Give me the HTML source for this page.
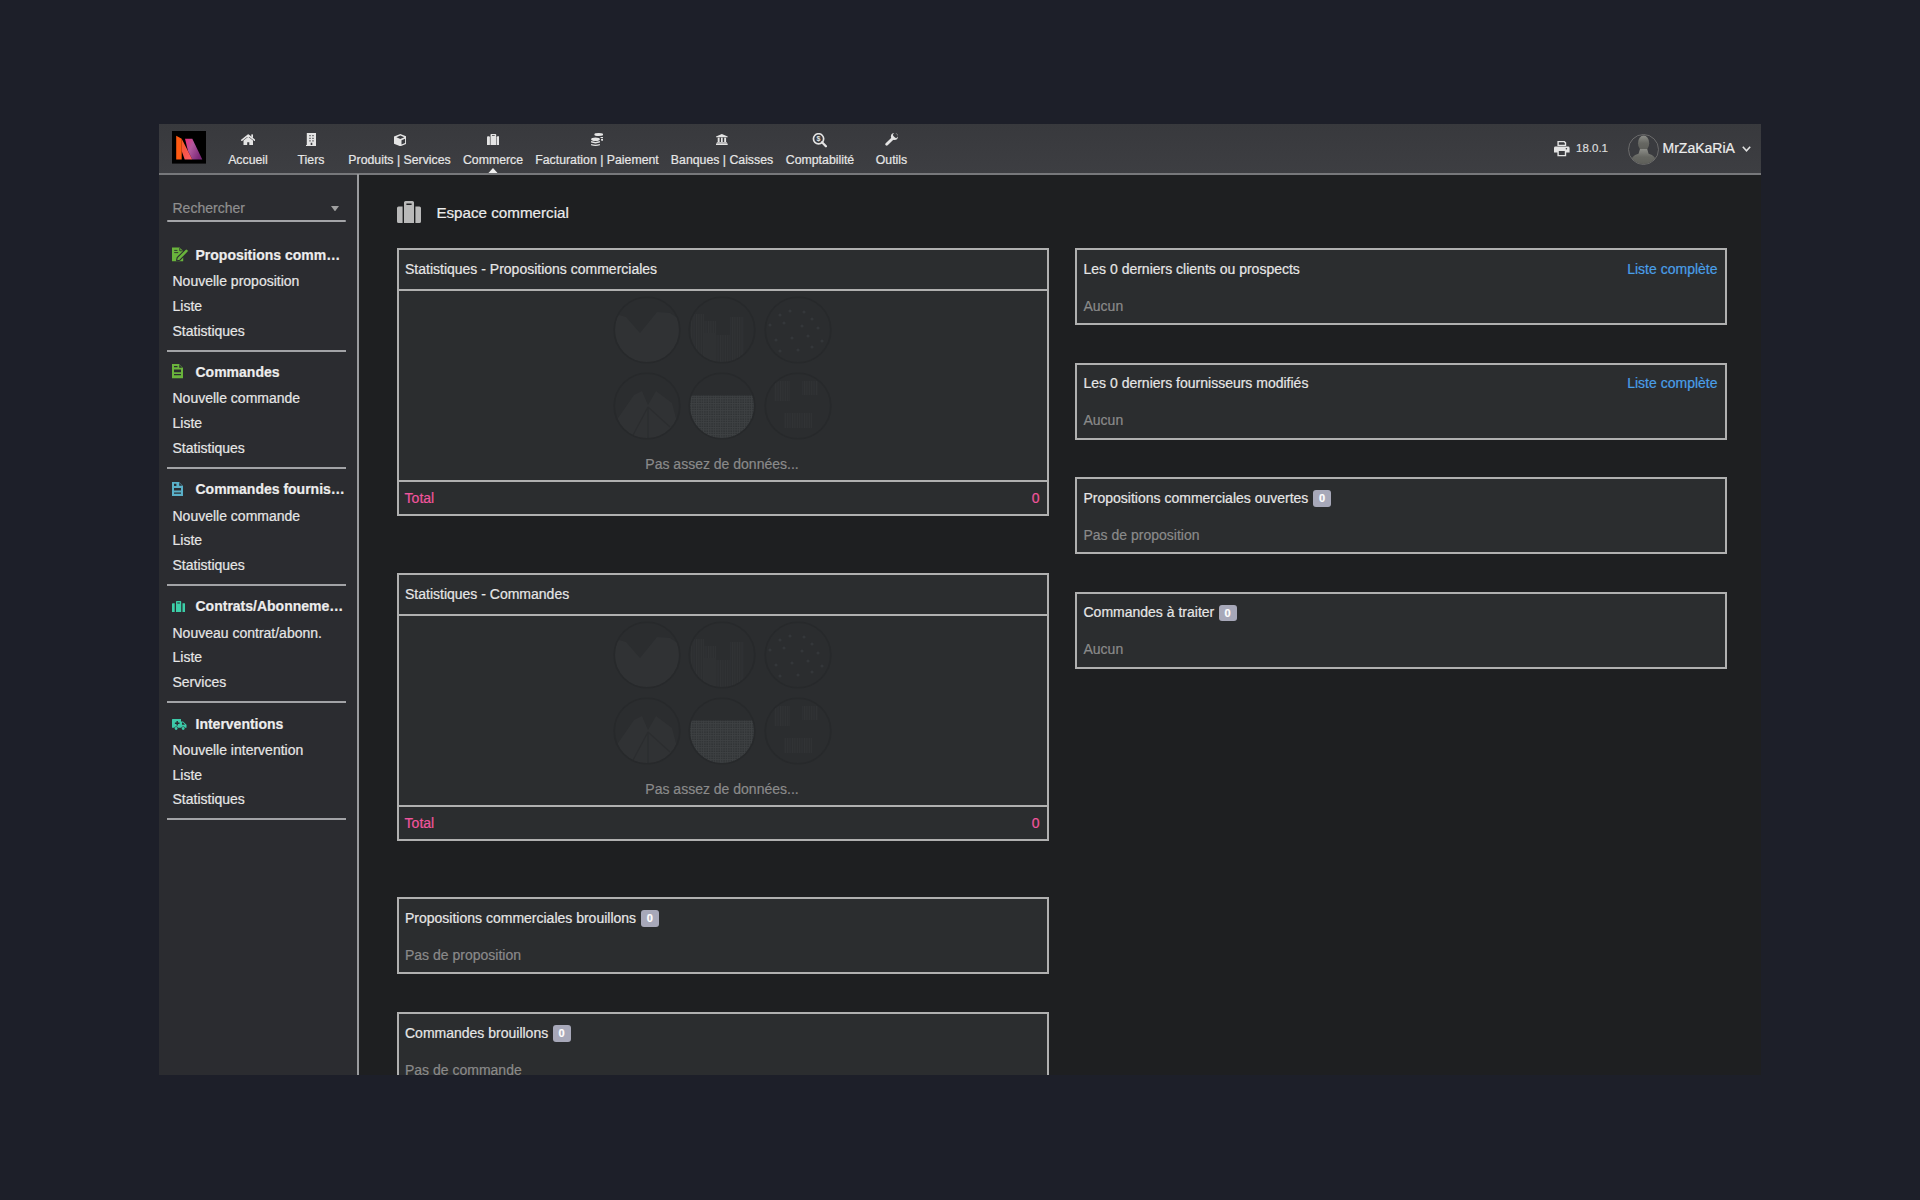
<!DOCTYPE html>
<html><head><meta charset="utf-8">
<style>
*{margin:0;padding:0;box-sizing:border-box}
html,body{width:1920px;height:1200px;overflow:hidden;background:#1d1f29;font-family:"Liberation Sans",sans-serif}
.a{position:absolute}
.t{position:absolute;white-space:nowrap;line-height:1;font-size:14px;color:#e6e6e6;-webkit-text-stroke:0.2px currentColor}
#frame{position:absolute;left:159px;top:124px;width:1602px;height:951px;background:#1e1f21;overflow:hidden}
#hdr{position:absolute;left:0;top:0;width:1602px;height:51px;background:linear-gradient(#38393d,#3d3e42);border-bottom:2px solid #77787b}
#side{position:absolute;left:0;top:51px;width:200px;height:900px;background:#2a2b2f;border-right:2px solid #9a9b9e}
.nav{position:absolute;top:29.7px;font-size:12.3px;line-height:1;color:#e6e6e6;-webkit-text-stroke:0.2px currentColor;white-space:nowrap;transform:translateX(-50%)}
.ico{position:absolute;fill:#e4e4e4}
.box{position:absolute;background:#2b2d2f;border:2px solid #b0b0b0}
.sep{position:absolute;height:2px;background:#b0b0b0}
.gray{color:#8a8a8a}
.pink{color:#f0559d}
.link{color:#4a9fe8}
.badge{position:absolute;width:18px;height:16px;border-radius:3px;background:#a7a8b9;color:#fff;font-size:11px;font-weight:bold;line-height:16.5px;text-align:center;-webkit-text-stroke:0.2px #fff}
.ssep{position:absolute;left:8px;width:179px;height:2px;background:#a9aaad}
.sh{font-weight:bold}
</style></head><body>
<div id="frame">
  <div id="hdr">
    <!-- logo -->
    <svg class="a" style="left:12.7px;top:7.2px" width="34.3" height="32.6" viewBox="0 0 34.3 32.6">
      <rect width="34.3" height="32.6" fill="#000"/>
      <defs>
        <linearGradient id="g1" x1="0" y1="0" x2="1" y2="1"><stop offset="0" stop-color="#ff5a1a"/><stop offset="0.5" stop-color="#f8554a"/><stop offset="1" stop-color="#ff5c6e"/></linearGradient>
        <linearGradient id="g2" x1="0" y1="0" x2="1" y2="0.6"><stop offset="0" stop-color="#f02c7c"/><stop offset="0.45" stop-color="#b0589e"/><stop offset="1" stop-color="#7c2878"/></linearGradient>
      </defs>
      <polygon points="13,7.8 20.3,7.8 30.3,28.5 20.3,28.5 16,20" fill="url(#g2)"/>
      <polygon points="4.2,4.7 9.7,7.8 9.7,28.5 4.2,28.5" fill="#ff5a12"/><polygon points="9.7,7.8 20.3,28.5 12.7,28.5 9.7,20" fill="url(#g1)"/>
    </svg>
    <!-- nav icons -->
    <svg class="ico" style="left:81.8px;top:9.7px" width="14.5" height="11.4" viewBox="0 0 14.5 11.4"><path d="M0.9 6.2 L7.25 1.1 L13.6 6.2" fill="none" stroke="#e4e4e4" stroke-width="1.7" stroke-linecap="round" stroke-linejoin="round"/><rect x="10.3" y="0.4" width="1.7" height="3.4"/><path d="M2.5 6.6 L7.25 2.8 L12 6.6 V11.4 H8.3 V8.2 H6.2 V11.4 H2.5 Z"/></svg>
    <svg class="ico" style="left:146.6px;top:8.8px" width="10.9" height="13.2" viewBox="0 0 10.9 13.2"><path d="M0.8 0 H10.1 V12.1 H10.9 V13.2 H0 V12.1 H0.8 Z M3.4 2.1 V3.3 H4.6 V2.1 Z M6.4 2.1 V3.3 H7.6 V2.1 Z M3.4 4.7 V5.9 H4.6 V4.7 Z M6.4 4.7 V5.9 H7.6 V4.7 Z M3.4 7.3 V8.5 H4.6 V7.3 Z M6.4 7.3 V8.5 H7.6 V7.3 Z M4.7 9.8 V12.1 H6.3 V9.8 Z" fill-rule="evenodd"/></svg>
    <svg class="ico" style="left:234.5px;top:9.5px" width="12.7" height="12.3" viewBox="0 0 12.7 12.3"><path d="M6.35 0 L12.7 2.6 V9.7 L6.35 12.3 L0 9.7 V2.6 Z M6.35 1.5 L2.4 3.2 L6.35 4.9 L10.3 3.2 Z M7.5 6.2 V10.4 L11.1 8.9 V4.7 Z" fill-rule="evenodd"/></svg>
    <svg class="ico" style="left:327.6px;top:9.8px" width="12.5" height="11.5" viewBox="0 0 12.5 11.5"><path d="M3.5 0.8 Q3.5 0 4.3 0 H8.4 Q9.2 0 9.2 0.8 V11.5 H3.5 Z M5 0.9 V1.7 H7.7 V0.9 Z" fill-rule="evenodd"/><rect x="0" y="2.2" width="2.9" height="9.3" rx="1"/><rect x="9.7" y="2.2" width="2.8" height="9.3" rx="1"/></svg>
    <svg class="ico" style="left:431.9px;top:9px" width="12.3" height="13.2" viewBox="0 0 12.3 13.2"><ellipse cx="7.8" cy="1.5" rx="4.5" ry="1.5"/><rect x="9.4" y="3.9" width="2.8" height="1.1" rx="0.5"/><rect x="10" y="5.7" width="2.2" height="2.1" rx="0.8"/><ellipse cx="4.5" cy="6.2" rx="4.4" ry="1.8"/><path d="M0.1 8.1 Q4.5 9.7 8.9 8.1 V9.6 Q4.5 11.2 0.1 9.6 Z M0.1 11 Q4.5 12.6 8.9 11 V12.2 Q4.5 13.8 0.1 12.2 Z"/></svg>
    <svg class="ico" style="left:557.3px;top:10px" width="11.7" height="11" viewBox="0 0 11.7 11"><path d="M5.85 0 L11.7 2.5 V3.3 H0 V2.5 Z M1.7 3.8 H3.6 V8 H1.7 Z M5 3.8 H6.7 V8 H5 Z M8.2 3.8 H10.1 V8 H8.2 Z M0.8 8.3 H10.9 V9.3 H0.8 Z M0 9.6 H11.7 V11 H0 Z"/></svg>
    <svg class="a" style="left:652.7px;top:8.9px" width="15.5" height="15" viewBox="0 0 15.5 15"><circle cx="6.55" cy="5.85" r="5.1" fill="none" stroke="#e4e4e4" stroke-width="1.7"/><path d="M10 9.3 L13.9 13.3" stroke="#e4e4e4" stroke-width="2.3" stroke-linecap="round"/><text x="6.55" y="8.3" font-family="Liberation Sans" font-weight="bold" font-size="7" text-anchor="middle" fill="#e4e4e4">$</text></svg>
    <svg class="a" style="left:726px;top:9px" width="13" height="13" viewBox="0 0 13 13"><defs><mask id="wm"><rect width="13" height="13" fill="#fff"/><path d="M9.6 -1 L13.5 2.9 L11.2 5.2 L10 4.6 L8.4 3 L7.8 1.8 Z" fill="#000"/></mask></defs><g mask="url(#wm)"><circle cx="9.4" cy="3.6" r="3.5" fill="#e4e4e4"/></g><path d="M7.6 5.4 L1.7 11.3" stroke="#e4e4e4" stroke-width="2.8" stroke-linecap="round"/></svg>
    <div class="nav" style="left:89px">Accueil</div>
    <div class="nav" style="left:152px">Tiers</div>
    <div class="nav" style="left:240.5px">Produits | Services</div>
    <div class="nav" style="left:334px">Commerce</div>
    <div class="nav" style="left:438px">Facturation | Paiement</div>
    <div class="nav" style="left:563px">Banques | Caisses</div>
    <div class="nav" style="left:661px">Comptabilité</div>
    <div class="nav" style="left:732.5px">Outils</div>
    <svg class="a" style="left:329px;top:43.5px" width="10" height="5.5" viewBox="0 0 10 5.5"><polygon points="5,0 10,5.5 0,5.5" fill="#f0f0f0"/></svg>
    <!-- right -->
    <svg class="ico" style="left:1395px;top:17.4px" width="15.6" height="15.3" viewBox="0 0 15.6 15.3"><path d="M3.4 0 H10.6 L12.2 1.6 V5 H3.4 Z M4.8 1.3 V3.7 H10.8 V2.2 L9.9 1.3 Z M1.4 5.6 H14.2 Q15.6 5.6 15.6 7 V11.6 H12.2 V15.3 H3.4 V11.6 H0 V7 Q0 5.6 1.4 5.6 Z M4.8 10 V13.9 H10.8 V10 Z M12.4 7 A0.8 0.8 0 1 0 12.4 8.6 A0.8 0.8 0 1 0 12.4 7 Z" fill-rule="evenodd"/></svg>
    <div class="t" style="left:1417px;top:19.2px;font-size:11.5px;color:#dcdcdc">18.0.1</div>
    <svg class="a" style="left:1469px;top:9.5px" width="31" height="31" viewBox="0 0 31 31">
      <defs><clipPath id="cc"><circle cx="15.5" cy="15.5" r="14.6"/></clipPath>
      <linearGradient id="avg" x1="0" y1="0" x2="0" y2="1"><stop offset="0" stop-color="#8c8d88"/><stop offset="0.5" stop-color="#666762"/><stop offset="1" stop-color="#5d5e59"/></linearGradient></defs>
      <circle cx="15.5" cy="15.5" r="15" fill="#3a3b3f" stroke="#707070" stroke-width="0.9"/>
      <g clip-path="url(#cc)" fill="url(#avg)">
        <ellipse cx="15.6" cy="9.2" rx="5.6" ry="7.6"/>
        <path d="M2 31 Q2.5 21.5 10.5 19.8 L12 15 H19.2 L20.6 19.8 Q28.5 21.5 29 31 Z"/>
      </g>
    </svg>
    <div class="t" style="left:1503.5px;top:17.2px;color:#ececec">MrZaKaRiA</div>
    <svg class="a" style="left:1582.5px;top:21.8px" width="9" height="6.5" viewBox="0 0 9 6.5"><path d="M0.8 0.8 L4.5 4.8 L8.2 0.8" fill="none" stroke="#e0e0e0" stroke-width="1.6"/></svg>
  </div>

<div class="a " style="left:0.00px;top:51.00px;width:198.00px;height:900.00px;background:#2b2c30"></div>
<div class="a " style="left:198.00px;top:50.00px;width:2.00px;height:901.00px;background:#9a9b9e"></div>
<div class="t gray" style="left:13.50px;top:77.15px;color:#8f8f8f">Rechercher</div>
<div class="a " style="left:7.80px;top:96.00px;width:179.20px;height:2.00px;background:#a4a5a8;border-radius:1px"></div>
<svg class="a" style="left:172.40px;top:81.80px;" width="8" height="5.4" viewBox="0 0 8 5.4"><polygon points="0,0 8,0 4,5.4" fill="#a0a0a0"/></svg>
<svg class="a" style="left:13.00px;top:123.00px;" width="17" height="14.5" viewBox="0 0 17 14.5"><path d="M0 0.4 H7.6 L11.2 4 V14.3 H0 Z" fill="#6ab43c"/><path d="M7.8 0.9 V3.8 H10.7" fill="none" stroke="#2b2c30" stroke-width="0.9"/><path d="M4.6 13.4 L5.2 10.6 L13.4 2.4 Q14.4 1.5 15.4 2.4 L16 3 Q16.9 4 16 5 L7.8 13.2 L5 13.8 Z" fill="#6ab43c" stroke="#2b2c30" stroke-width="1.1"/><path d="M2.2 3.4 H5.4 M2.2 5.6 H6.2" stroke="#2b2c30" stroke-width="0.9"/></svg>
<div class="t sh" style="left:36.50px;top:124.15px;color:#ededed">Propositions comm…</div>
<div class="t " style="left:13.50px;top:150.35px;">Nouvelle proposition</div>
<div class="t " style="left:13.50px;top:175.15px;">Liste</div>
<div class="t " style="left:13.50px;top:199.95px;">Statistiques</div>
<div class="a " style="left:7.80px;top:225.80px;width:179.20px;height:1.80px;background:#a2a3a6"></div>
<svg class="a" style="left:13.00px;top:240.40px;" width="11" height="14.3" viewBox="0 0 11 14.3"><path d="M0 0 H7 L11 4 V14.3 H0 Z M7.2 0.8 V3.8 H10.2 Z M2 5.5 V8.2 H9 V5.5 Z M2 10 V11.2 H9 V10 Z M2 2 V3.3 H5.5 V2 Z" fill="#6ab43c" fill-rule="evenodd"/></svg>
<div class="t sh" style="left:36.50px;top:241.25px;color:#ededed">Commandes</div>
<div class="t " style="left:13.50px;top:267.45px;">Nouvelle commande</div>
<div class="t " style="left:13.50px;top:292.25px;">Liste</div>
<div class="t " style="left:13.50px;top:317.05px;">Statistiques</div>
<div class="a " style="left:7.80px;top:342.90px;width:179.20px;height:1.80px;background:#a2a3a6"></div>
<svg class="a" style="left:13.00px;top:357.90px;" width="11" height="14.1" viewBox="0 0 11 14.1"><path d="M0 0 H7 L11 4 V14.1 H0 Z M7.2 0.8 V3.8 H10.2 Z M2 6 V8.5 H9 V6 Z M2 10.5 V11.7 H9 V10.5 Z M2 1.8 V4 H4.4 V1.8 Z" fill="#5ab0c8" fill-rule="evenodd"/></svg>
<div class="t sh" style="left:36.50px;top:358.35px;color:#ededed">Commandes fournis…</div>
<div class="t " style="left:13.50px;top:384.55px;">Nouvelle commande</div>
<div class="t " style="left:13.50px;top:409.35px;">Liste</div>
<div class="t " style="left:13.50px;top:434.15px;">Statistiques</div>
<div class="a " style="left:7.80px;top:460.00px;width:179.20px;height:1.80px;background:#a2a3a6"></div>
<svg class="a" style="left:13.20px;top:476.90px;" width="13.2" height="11.5" viewBox="0 0 13.2 11.5"><path d="M4 0.8 Q4 0 4.8 0 H8.4 Q9.2 0 9.2 0.8 V11.5 H4 Z M5.3 1.4 V2.4 H7.9 V1.4 Z M0 3 Q0 2.2 0.8 2.2 H2.7 V11.5 H0.8 Q0 11.5 0 10.7 Z M10.5 2.2 H12.4 Q13.2 2.2 13.2 3 V10.7 Q13.2 11.5 12.4 11.5 H10.5 Z" fill="#3ccfa8" fill-rule="evenodd"/></svg>
<div class="t sh" style="left:36.50px;top:475.45px;color:#ededed">Contrats/Abonneme…</div>
<div class="t " style="left:13.50px;top:501.65px;">Nouveau contrat/abonn.</div>
<div class="t " style="left:13.50px;top:526.45px;">Liste</div>
<div class="t " style="left:13.50px;top:551.25px;">Services</div>
<div class="a " style="left:7.80px;top:577.10px;width:179.20px;height:1.80px;background:#a2a3a6"></div>
<svg class="a" style="left:13.20px;top:594.80px;" width="14.5" height="11" viewBox="0 0 14.5 11"><path d="M0.6 0 H9 V2.6 H11 L14.5 5.8 V8.7 H13 A2 2 0 0 0 9.3 8.7 H6 A2 2 0 0 0 2.3 8.7 H0 V0.6 Q0 0 0.6 0 Z M4.5 2 V3.6 H2.9 V5 H4.5 V6.6 H5.9 V5 H7.5 V3.6 H5.9 V2 Z M10 3.6 V5.8 H13 L11 3.6 Z" fill="#3cc9a8" fill-rule="evenodd"/><circle cx="4.1" cy="9.5" r="1.4" fill="#3cc9a8"/><circle cx="11.2" cy="9.5" r="1.4" fill="#3cc9a8"/></svg>
<div class="t sh" style="left:36.50px;top:592.55px;color:#ededed">Interventions</div>
<div class="t " style="left:13.50px;top:618.75px;">Nouvelle intervention</div>
<div class="t " style="left:13.50px;top:643.55px;">Liste</div>
<div class="t " style="left:13.50px;top:668.35px;">Statistiques</div>
<div class="a " style="left:7.80px;top:694.20px;width:179.20px;height:1.80px;background:#a2a3a6"></div>
<svg class="a" style="left:238.00px;top:77.00px;" width="24" height="22" viewBox="0 0 24 22"><path d="M7 1.6 Q7 0 8.6 0 H15.4 Q17 0 17 1.6 V22 H7 Z M9.4 2.6 V4 H14.6 V2.6 Z M0 7 Q0 5.4 1.6 5.4 H5.6 V22 H1.6 Q0 22 0 20.4 Z M18.4 5.4 H22.4 Q24 5.4 24 7 V20.4 Q24 22 22.4 22 H18.4 Z" fill="#b9b9b9" fill-rule="evenodd"/></svg>
<div class="t " style="left:277.40px;top:80.73px;font-size:15.2px;color:#ececec">Espace commercial</div>
<div class="a box" style="left:237.50px;top:124.00px;width:652.50px;height:268.00px;"></div>
<div class="a sep" style="left:237.50px;top:165.00px;width:652.50px;height:1.80px;"></div>
<div class="a sep" style="left:237.50px;top:356.00px;width:652.50px;height:1.80px;"></div>
<div class="t " style="left:246.00px;top:138.15px;">Statistiques - Propositions commerciales</div>
<svg class="a" style="left:453.00px;top:171.00px;" width="221" height="146" viewBox="0 0 221 146"><defs><clipPath id="cp330_0"><circle cx="35" cy="35" r="32.5"/></clipPath><clipPath id="cp330_1"><circle cx="110" cy="35" r="32.5"/></clipPath><clipPath id="cp330_2"><circle cx="186" cy="35" r="32.5"/></clipPath><clipPath id="cp330_3"><circle cx="35" cy="111" r="32.5"/></clipPath><clipPath id="cp330_4"><circle cx="110" cy="111" r="32.5"/></clipPath><clipPath id="cp330_5"><circle cx="186" cy="111" r="32.5"/></clipPath><pattern id="grid330" width="2.4" height="2.4" patternUnits="userSpaceOnUse"><rect width="2.4" height="2.4" fill="#2f3234"/><path d="M0 0.5 H2.4 M0.5 0 V2.4" stroke="#3e4143" stroke-width="0.9"/></pattern><pattern id="vs330" width="2.4" height="4" patternUnits="userSpaceOnUse"><rect width="2.4" height="4" fill="#2c2e30"/><path d="M0.5 0 V4" stroke="#313335" stroke-width="0.9"/></pattern></defs><g clip-path="url(#cp330_0)"><path d="M0 18 L14 22 L28 38 L45 17 L58 18 L70 26 V70 H0 Z" fill="#303234"/></g><g clip-path="url(#cp330_1)"><path d="M78 19 H92 V70 H78 Z M92 26 H104 V38 H92 Z M104 40 H118 V70 H104 Z M118 22 H132 V70 H118 Z" fill="url(#vs330)"/><path d="M92 38 H104 V70 H92 Z" fill="#2f3133"/></g><circle cx="168" cy="20" r="1.6" fill="#34373a"/><circle cx="178" cy="16" r="1.6" fill="#34373a"/><circle cx="192" cy="17" r="1.6" fill="#34373a"/><circle cx="200" cy="24" r="1.6" fill="#34373a"/><circle cx="158" cy="30" r="1.6" fill="#34373a"/><circle cx="172" cy="28" r="1.6" fill="#34373a"/><circle cx="190" cy="31" r="1.6" fill="#34373a"/><circle cx="206" cy="33" r="1.6" fill="#34373a"/><circle cx="164" cy="45" r="1.6" fill="#34373a"/><circle cx="180" cy="43" r="1.6" fill="#34373a"/><circle cx="196" cy="41" r="1.6" fill="#34373a"/><circle cx="210" cy="46" r="1.6" fill="#34373a"/><circle cx="168" cy="56" r="1.6" fill="#34373a"/><circle cx="186" cy="55" r="1.6" fill="#34373a"/><circle cx="200" cy="52" r="1.6" fill="#34373a"/><g clip-path="url(#cp330_3)"><path d="M4 126 L22 100 L30 96 L36 110 L44 96 L60 108 L70 146 H0 Z" fill="#303234"/><path d="M36 112 L20 142 M36 112 L58 132 M36 112 L36 146" stroke="#2b2d2f" stroke-width="1.2"/></g><g clip-path="url(#cp330_4)"><rect x="70" y="100.5" width="80" height="50" fill="url(#grid330)"/></g><g clip-path="url(#cp330_5)"><path d="M162 86 H178 V106 H162 Z M190 86 H206 V100 H190 Z M172 118 H200 V133 H172 Z" fill="url(#vs330)"/></g><circle cx="35" cy="35" r="32.8" fill="none" stroke="#27292b" stroke-width="1.6"/><circle cx="35" cy="111" r="32.8" fill="none" stroke="#27292b" stroke-width="1.6"/><circle cx="110" cy="35" r="32.8" fill="none" stroke="#27292b" stroke-width="1.6"/><circle cx="110" cy="111" r="32.8" fill="none" stroke="#27292b" stroke-width="1.6"/><circle cx="186" cy="35" r="32.8" fill="none" stroke="#27292b" stroke-width="1.6"/><circle cx="186" cy="111" r="32.8" fill="none" stroke="#27292b" stroke-width="1.6"/></svg>
<div class="t gray" style="left:563.00px;transform:translateX(-50%);top:332.65px;">Pas assez de données...</div>
<div class="t pink" style="left:245.60px;top:366.85px;">Total</div>
<div class="t pink" style="right:721.50px;top:366.85px;">0</div>
<div class="a box" style="left:237.50px;top:449.00px;width:652.50px;height:268.00px;"></div>
<div class="a sep" style="left:237.50px;top:490.00px;width:652.50px;height:1.80px;"></div>
<div class="a sep" style="left:237.50px;top:681.00px;width:652.50px;height:1.80px;"></div>
<div class="t " style="left:246.00px;top:463.15px;">Statistiques - Commandes</div>
<svg class="a" style="left:453.00px;top:496.00px;" width="221" height="146" viewBox="0 0 221 146"><defs><clipPath id="cp655_0"><circle cx="35" cy="35" r="32.5"/></clipPath><clipPath id="cp655_1"><circle cx="110" cy="35" r="32.5"/></clipPath><clipPath id="cp655_2"><circle cx="186" cy="35" r="32.5"/></clipPath><clipPath id="cp655_3"><circle cx="35" cy="111" r="32.5"/></clipPath><clipPath id="cp655_4"><circle cx="110" cy="111" r="32.5"/></clipPath><clipPath id="cp655_5"><circle cx="186" cy="111" r="32.5"/></clipPath><pattern id="grid655" width="2.4" height="2.4" patternUnits="userSpaceOnUse"><rect width="2.4" height="2.4" fill="#2f3234"/><path d="M0 0.5 H2.4 M0.5 0 V2.4" stroke="#3e4143" stroke-width="0.9"/></pattern><pattern id="vs655" width="2.4" height="4" patternUnits="userSpaceOnUse"><rect width="2.4" height="4" fill="#2c2e30"/><path d="M0.5 0 V4" stroke="#313335" stroke-width="0.9"/></pattern></defs><g clip-path="url(#cp655_0)"><path d="M0 18 L14 22 L28 38 L45 17 L58 18 L70 26 V70 H0 Z" fill="#303234"/></g><g clip-path="url(#cp655_1)"><path d="M78 19 H92 V70 H78 Z M92 26 H104 V38 H92 Z M104 40 H118 V70 H104 Z M118 22 H132 V70 H118 Z" fill="url(#vs655)"/><path d="M92 38 H104 V70 H92 Z" fill="#2f3133"/></g><circle cx="168" cy="20" r="1.6" fill="#34373a"/><circle cx="178" cy="16" r="1.6" fill="#34373a"/><circle cx="192" cy="17" r="1.6" fill="#34373a"/><circle cx="200" cy="24" r="1.6" fill="#34373a"/><circle cx="158" cy="30" r="1.6" fill="#34373a"/><circle cx="172" cy="28" r="1.6" fill="#34373a"/><circle cx="190" cy="31" r="1.6" fill="#34373a"/><circle cx="206" cy="33" r="1.6" fill="#34373a"/><circle cx="164" cy="45" r="1.6" fill="#34373a"/><circle cx="180" cy="43" r="1.6" fill="#34373a"/><circle cx="196" cy="41" r="1.6" fill="#34373a"/><circle cx="210" cy="46" r="1.6" fill="#34373a"/><circle cx="168" cy="56" r="1.6" fill="#34373a"/><circle cx="186" cy="55" r="1.6" fill="#34373a"/><circle cx="200" cy="52" r="1.6" fill="#34373a"/><g clip-path="url(#cp655_3)"><path d="M4 126 L22 100 L30 96 L36 110 L44 96 L60 108 L70 146 H0 Z" fill="#303234"/><path d="M36 112 L20 142 M36 112 L58 132 M36 112 L36 146" stroke="#2b2d2f" stroke-width="1.2"/></g><g clip-path="url(#cp655_4)"><rect x="70" y="100.5" width="80" height="50" fill="url(#grid655)"/></g><g clip-path="url(#cp655_5)"><path d="M162 86 H178 V106 H162 Z M190 86 H206 V100 H190 Z M172 118 H200 V133 H172 Z" fill="url(#vs655)"/></g><circle cx="35" cy="35" r="32.8" fill="none" stroke="#27292b" stroke-width="1.6"/><circle cx="35" cy="111" r="32.8" fill="none" stroke="#27292b" stroke-width="1.6"/><circle cx="110" cy="35" r="32.8" fill="none" stroke="#27292b" stroke-width="1.6"/><circle cx="110" cy="111" r="32.8" fill="none" stroke="#27292b" stroke-width="1.6"/><circle cx="186" cy="35" r="32.8" fill="none" stroke="#27292b" stroke-width="1.6"/><circle cx="186" cy="111" r="32.8" fill="none" stroke="#27292b" stroke-width="1.6"/></svg>
<div class="t gray" style="left:563.00px;transform:translateX(-50%);top:657.65px;">Pas assez de données...</div>
<div class="t pink" style="left:245.60px;top:691.85px;">Total</div>
<div class="t pink" style="right:721.50px;top:691.85px;">0</div>
<div class="a box" style="left:916.00px;top:124.00px;width:651.50px;height:77.00px;"></div>
<div class="t " style="left:924.50px;top:137.95px;">Les 0 derniers clients ou prospects</div>
<div class="t link" style="right:43.50px;top:137.95px;">Liste complète</div>
<div class="t gray" style="left:924.50px;top:174.75px;">Aucun</div>
<div class="a box" style="left:916.00px;top:238.50px;width:651.50px;height:77.00px;"></div>
<div class="t " style="left:924.50px;top:252.45px;">Les 0 derniers fournisseurs modifiés</div>
<div class="t link" style="right:43.50px;top:252.45px;">Liste complète</div>
<div class="t gray" style="left:924.50px;top:289.25px;">Aucun</div>
<div class="a box" style="left:916.00px;top:353.00px;width:651.50px;height:77.00px;"></div>
<div class="t " style="left:924.50px;top:366.95px;">Propositions commerciales ouvertes</div>
<div class="a badge" style="left:1154.00px;top:366.40px;width:18.00px;height:16.40px;">0</div>
<div class="t gray" style="left:924.50px;top:403.75px;">Pas de proposition</div>
<div class="a box" style="left:916.00px;top:467.50px;width:651.50px;height:77.00px;"></div>
<div class="t " style="left:924.50px;top:481.45px;">Commandes à traiter</div>
<div class="a badge" style="left:1059.50px;top:480.90px;width:18.00px;height:16.40px;">0</div>
<div class="t gray" style="left:924.50px;top:518.25px;">Aucun</div>
<div class="a box" style="left:237.50px;top:773.00px;width:652.50px;height:77.00px;"></div>
<div class="t " style="left:246.00px;top:786.95px;">Propositions commerciales brouillons</div>
<div class="a badge" style="left:481.70px;top:786.40px;width:18.00px;height:16.40px;">0</div>
<div class="t gray" style="left:246.00px;top:823.75px;">Pas de proposition</div>
<div class="a box" style="left:237.50px;top:888.00px;width:652.50px;height:77.00px;"></div>
<div class="t " style="left:246.00px;top:901.95px;">Commandes brouillons</div>
<div class="a badge" style="left:393.50px;top:901.40px;width:18.00px;height:16.40px;">0</div>
<div class="t gray" style="left:246.00px;top:938.75px;">Pas de commande</div>
</div>
</body></html>
